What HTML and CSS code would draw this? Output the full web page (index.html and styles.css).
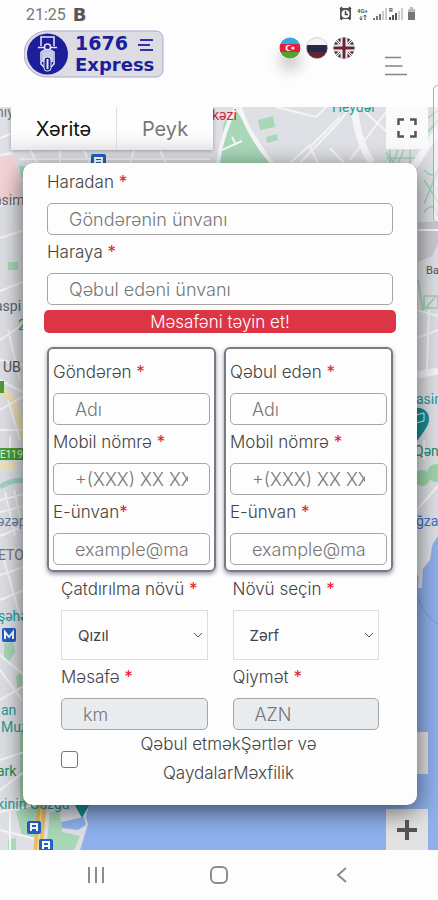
FILE: index.html
```html
<!DOCTYPE html>
<html lang="az">
<head>
    <meta charset="UTF-8">
    <meta name="viewport" content="width=device-width, initial-scale=1.0">
    <title>1676 Express</title>
    <link rel="stylesheet" href="styles.css">
</head>
<body>

    <div class="status-bar">
        <span class="clock">21:25</span>
        <b class="badge-b">B</b>
        <svg class="status-icons" width="80" height="18" viewBox="0 0 80 18">
            <path d="M3 3h11v11H3z" fill="#555"/>
            <circle cx="8.5" cy="9" r="4" fill="#fff"/>
            <path d="M8.5 6v3.5H11M3 4l2-2M14 4l-2-2M4 15l1-2M13 15l-1-2" fill="none" stroke="#444" stroke-width="1.5"/>
            <text x="20" y="8" font-size="6" font-weight="bold">4G+</text>
            <path d="M24 15v-4M22.5 13.5 24 15l1.5-1.5M28 15v-5M26.5 11.5 28 10l1.5 1.5" fill="none" stroke="#555"/>
            <path d="M37 15v-2M40 15v-4M43 15V9" stroke="#777" stroke-width="2"/>
            <path d="M46 15V6M49 15V3" stroke="#ccc" stroke-width="2"/>
            <path d="M53 15v-3M56 15v-5M59 15V8" stroke="#555" stroke-width="2"/>
            <path d="M62 15V6M65 15V3" stroke="#ccc" stroke-width="2"/>
            <text x="52" y="7" font-size="6" font-weight="bold">R</text>
            <path d="M71 4h2V2h3v2h2v5h-7z" fill="#bbb"/>
            <path d="M71 7h7v8h-7z" fill="#777"/>
        </svg>
    </div>

    <header class="header">
        <a href="#" class="logo" aria-label="1676 Express">
            <svg width="140" height="48" viewBox="0 0 140 48">
                <path d="M23 1H132a7 7 0 0 1 7 7v32a7 7 0 0 1-7 7H23a23 23 0 0 1 0-46z" fill="#dcdce2" stroke="#a9a9cf"/>
                <circle cx="23.5" cy="24" r="20.5" fill="#1c1e9c"/>
                <g fill="none" stroke="#e8e8f2" stroke-width="1.5">
                    <path d="M17 16V7h13v9M14 17.5h6M27 17.5h6"/>
                    <circle cx="23.5" cy="17" r="3"/>
                    <path d="M17 22c4-3 9-3 13 0v12l-3 3M17 22v12l3 3"/>
                </g>
                <path d="M18 22c3-2 8-2 11 0v10H18z" fill="#c6c8e4"/>
                <rect x="20" y="27" width="7" height="14" rx="3" fill="#1c1e9c" stroke="#e8e8f2"/>
                <path d="M23.5 29v10" stroke="#e8e8f2" stroke-width="2"/>
                <text x="51" y="20" font-size="19">1676</text>
                <text x="51" y="41" font-size="18">Express</text>
                <path d="M116 10h13M114 15h12M116 20h13" stroke="#3032a4" stroke-width="2"/>
            </svg>
        </a>
        <nav class="langs">
            <a href="#" class="active" aria-label="Azərbaycan">
                <svg width="22" height="22" viewBox="0 0 22 22">
                    <clipPath id="round"><circle cx="11" cy="11" r="10.5"/></clipPath>
                    <g clip-path="url(#round)">
                        <path d="M0 0h22v7H0z" fill="#35a9dc"/>
                        <path d="M0 7h22v8H0z" fill="#e5203c"/>
                        <path d="M0 15h22v7H0z" fill="#57a32d"/>
                    </g>
                    <circle cx="9.5" cy="11" r="3" fill="#fff"/>
                    <circle cx="10.5" cy="11" r="2.3" fill="#e5203c"/>
                    <circle cx="14" cy="11" r="1.5" fill="#fff"/>
                </svg>
            </a>
            <a href="#" aria-label="Русский">
                <svg width="22" height="22" viewBox="0 0 22 22">
                    <g clip-path="url(#round)">
                        <path d="M0 0h22v8H0z" fill="#f4f4f6"/>
                        <path d="M0 8h22v7H0z" fill="#222a47"/>
                        <path d="M0 15h22v7H0z" fill="#622532"/>
                    </g>
                    <circle cx="11" cy="11" r="10.5" fill="none" stroke="#aaa" stroke-width=".5"/>
                </svg>
            </a>
            <a href="#" aria-label="English">
                <svg width="22" height="22" viewBox="0 0 22 22">
                    <g clip-path="url(#round)">
                        <path d="M0 0h22v22H0z" fill="#23263a"/>
                        <path d="M1 1l20 20M21 1 1 21" stroke="#eee" stroke-width="3"/>
                        <path d="M1 1l20 20M21 1 1 21" stroke="#8b3545" stroke-width="1"/>
                        <path d="M11 0v22M0 11h22" stroke="#eee" stroke-width="7"/>
                        <path d="M11 0v22M0 11h22" stroke="#6e2634" stroke-width="3"/>
                    </g>
                </svg>
            </a>
        </nav>
        <button class="menu-btn" aria-label="Menyu">
            <svg width="22" height="20" viewBox="0 0 22 20">
                <path d="M0 1.5h16M0 10h17.5M0 18.5h22" stroke="#858585" stroke-width="1.5"/>
            </svg>
        </button>
    </header>

    <main class="map">
        <svg class="map-canvas" viewBox="0 107 438 743" preserveAspectRatio="xMidYMid slice" aria-hidden="true">
            <rect y="107" width="438" height="743" fill="#dfe0e5"/>

            <!-- sea -->
            <path d="M438 536c-9 12-15 30-25 48L380 790l-50 10H90l-4 18 2 6-8 26h358z" fill="#8fb0ec"/>
            <path d="M412 520h24l-6 40-8 10-2 12-4-14-8 2z" fill="#dfe0e5"/>
            <path d="M422 540l-2 48" stroke="#dfe0e5" stroke-width="4"/>
            <path d="M418 598q8 20 20 26" fill="none" stroke="#7c9ad2"/>

            <!-- parks -->
            <path d="M218 163l6-41 14-13 6 15 28 39z" fill="#a8d8b8"/>
            <path d="M258 120l15-4 2 11-15 3zM266 137l11-3 1 6-11 3z" fill="#a8d8b8"/>
            <path d="M0 157l13-2 9 27-4 16-18 4z" fill="#f3d3d6"/>
            <path d="M8 262h10v8H8zM19 166h8v12h-6zM4 643l9-1 2 10-6 10-5-4zM16 676l6-4v14l-5 2zM20 730h8v80h-8z" fill="#a8d8b8"/>
            <path d="M16 812l24-10v38l-18-4zM50 812h10l2 20 18 4-6 14H46zM8 840l8-2v12H8z" fill="#a8d8b8"/>
            <path d="M61 822l23-5 2 8-8 5-16-2z" fill="#8fb0ec"/>
            <path d="M0 390q20 10 22 50M0 466h16" stroke="#f1e3b8" stroke-width="7" fill="none"/>
            <path d="M0 487q12-8 26-6" stroke="#9fd3c8" stroke-width="5" fill="none"/>
            <g fill="none" stroke="#9ed2b2" stroke-width="1.5">
                <path d="M386 152l10 14M390 150v20M398 150l-6 16M404 150l-8 18M410 150v16M386 158h30M424 170q10 10 14 0M424 180l14 22M438 170l-14 34M424 212q10-12 14 4M428 118l10-8M428 132l10-12M424 296h14v12h-14zM426 308l10-12M418 280l5 30h-6"/>
            </g>
            <path d="M418 222h20v22l-6 12-14 6z" fill="#c9cad0"/>
            <circle cx="422" cy="478" r="8" fill="#9fd6ab"/>
            <circle cx="436" cy="473" r="9" fill="#9fd6ab"/>

            <!-- roads -->
            <g fill="none" stroke="#f4f5f7" stroke-width="2">
                <path d="M0 138l30-12M0 155l12-2M0 205l30-8M0 238l30-10M0 291l30-12M0 340l30-20M0 360l30 6M8 330l12 50M0 380l30 16M0 410l24-14M8 400l12 40M0 430h24M10 436v20"/>
                <path d="M0 500l24-6M0 512l24-6M5 492l10 44M14 490l8 36M0 536l24-10M0 575l24-8M4 560l16 56M0 600l24-10M0 655l24 20M0 670l22 30M0 700l24-14M0 760l24-8M0 790l24-18M0 812l40-8M0 830l40 10M10 812v38"/>
                <path d="M30 150l8 14M60 150v14M84 150l6 14M134 150l-4 14M160 150l6 14M20 159h190"/>
                <path d="M222 150l20-9M236 145l-4-8M236 108l36 55M300 163l40-42 10-14M318 163l-8-16 30-30M330 148l14 15M350 160l36-48M360 107l26 24M290 163l20-18M276 107l40 10 10-10M417 230h21M417 310l21 6M417 338l21-8M429 310l-2 60M417 400l21-4M417 510l21-24M424 440v20"/>
            </g>
            <path d="M218 163q4-30 18-56M240 107q8 28 32 56" stroke="#f4f5f7" stroke-width="4" fill="none"/>
            <path d="M354 107q4 36 18 56M438 130l-24 36M417 375l21-4" stroke="#f4f5f7" stroke-width="7" fill="none"/>
            <path d="M42 804l-4 46" stroke="#e6bd60" stroke-width="9"/>
            <path d="M42 804l-4 46" stroke="#f3d790" stroke-width="2"/>

            <path d="M0 381h4v12H0zM0 448h24v12H0z" fill="#4d9b35"/>
            <path d="M416 408a11 11 0 0 1 13 12q0 6-13 22z" fill="#17909b"/>
            <path d="M416 415l8-2v8l-8 2z" fill="none" stroke="#fff"/>
            <path d="M72 800h20l-10 18z" fill="#17909b"/>
            <g fill="#2161c7">
                <rect x="91" y="154" width="15" height="14" rx="2"/>
                <rect x="2" y="628" width="14" height="14" rx="2"/>
                <rect x="27" y="821" width="14" height="13" rx="2"/>
                <rect x="39" y="839" width="14" height="13" rx="2"/>
            </g>
            <g fill="none" stroke="#fff" stroke-width="2">
                <path d="M95 164v-6h7v6M95 161h7M31 831v-7h6v7M31 828h6M43 849v-7h6v7M43 846h6"/>
                <path d="M5 639v-7l4 5 4-5v7"/>
            </g>

            <!-- labels -->
            <g class="map-text">
                <text x="-4" y="117" fill="#777">nıy</text>
                <text x="-6" y="205" fill="#666">asim</text>
                <text x="-5" y="311" fill="#567">aspi</text>
                <text x="18" y="330" fill="#2a9a58">2</text>
                <text x="3" y="372" fill="#555">UB</text>
                <text x="0" y="458" font-size="10" fill="#dfe">E119</text>
                <text x="-3" y="526" fill="#68809a">əzəp</text>
                <text x="-2" y="560" fill="#777">ETO</text>
                <text x="-2" y="621" fill="#1e9a96">şəhər</text>
                <text x="1" y="715" fill="#1e9a96">an</text>
                <text x="1" y="732" fill="#1e9a96">Muz</text>
                <text x="-3" y="776" fill="#1d8a50">ark</text>
                <text x="-3" y="809" fill="#1e9a96">kinin Güzgü</text>
                <text x="212" y="120" fill="#d3263a">kəzi</text>
                <text x="332" y="112" fill="#1e9a96">Heydər</text>
                <text x="426" y="274" font-size="11" fill="#555">Bakı</text>
                <text x="416" y="404" fill="#1e9a96">asim</text>
                <text x="414" y="456" fill="#1d8a70">Qən</text>
                <text x="416" y="526" fill="#3b70c9">ğza</text>
            </g>
        </svg>

        <div class="map-types">
            <button class="active">Xəritə</button>
            <button>Peyk</button>
        </div>

        <button class="map-btn fullscreen" aria-label="Tam ekran">
            <svg width="20" height="20" viewBox="0 0 20 20">
                <path d="M1.5 7V1.5H7M13 1.5h5.5V7M18.5 13v5.5H13M7 18.5H1.5V13" fill="none" stroke="#555" stroke-width="2.5"/>
            </svg>
        </button>
        <button class="map-btn pegman" aria-label="Küçə görünüşü"></button>
        <button class="map-btn zoom-in" aria-label="Yaxınlaşdır">
            <svg width="20" height="20" viewBox="0 0 20 20">
                <path d="M10 0v20M0 10h20" stroke="#555" stroke-width="4"/>
            </svg>
        </button>

        <form class="order">
            <label for="from">Haradan <i>*</i></label>
            <input type="text" id="from" placeholder="Göndərənin ünvanı">
            <label for="to">Haraya <i>*</i></label>
            <input type="text" id="to" placeholder="Qəbul edəni ünvanı">
            <button type="button" class="distance-btn">Məsafəni təyin et!</button>

            <div class="people">
                <div class="person">
                    <label for="senderName">Göndərən <i>*</i></label>
                    <input type="text" id="senderName" placeholder="Adı">
                    <label for="senderPhone">Mobil nömrə <i>*</i></label>
                    <input type="tel" id="senderPhone" placeholder="+(XXX) XX XXX XX XX">
                    <label for="senderMail">E-ünvan<i>*</i></label>
                    <input type="email" id="senderMail" placeholder="example@mail.com">
                </div>
                <div class="person">
                    <label for="receiverName">Qəbul edən <i>*</i></label>
                    <input type="text" id="receiverName" placeholder="Adı">
                    <label for="receiverPhone">Mobil nömrə <i>*</i></label>
                    <input type="tel" id="receiverPhone" placeholder="+(XXX) XX XXX XX XX">
                    <label for="receiverMail">E-ünvan <i>*</i></label>
                    <input type="email" id="receiverMail" placeholder="example@mail.com">
                </div>
            </div>

            <div class="delivery">
                <div>
                    <label for="kind">Çatdırılma növü <i>*</i></label>
                    <select id="kind">
                        <option>Qızıl</option>
                    </select>
                    <label for="distance">Məsafə <i>*</i></label>
                    <input type="text" id="distance" placeholder="km" disabled>
                </div>
                <div>
                    <label for="parcel">Növü seçin <i>*</i></label>
                    <select id="parcel">
                        <option>Zərf</option>
                    </select>
                    <label for="price">Qiymət <i>*</i></label>
                    <input type="text" id="price" placeholder="AZN" disabled>
                </div>
            </div>

            <div class="terms">
                <input type="checkbox" id="agree">
                <label for="agree">Qəbul etməkŞərtlər və QaydalarMəxfilik</label>
            </div>
        </form>
    </main>

    <footer class="system-nav">
        <button aria-label="Son tətbiqlər">
            <svg width="18" height="18" viewBox="0 0 18 18">
                <path d="M2 1v16M9 1v16M16 1v16" stroke="#8c8c8c" stroke-width="2"/>
            </svg>
        </button>
        <button aria-label="Əsas ekran">
            <svg width="18" height="18" viewBox="0 0 18 18">
                <rect x="1" y="1" width="16" height="16" rx="5" fill="none" stroke="#8c8c8c" stroke-width="2"/>
            </svg>
        </button>
        <button aria-label="Geri">
            <svg width="18" height="18" viewBox="0 0 18 18">
                <path d="M13 2 5 9l8 7" fill="none" stroke="#8c8c8c" stroke-width="2"/>
            </svg>
        </button>
    </footer>

    <div class="edge-handle"></div>

</body>
</html>
```

FILE: styles.css
```css
* {
    box-sizing: border-box;
}

body {
    font-family: Inter, "Open Sans", sans-serif;
    font-size: 17px;
    font-weight: 300;
    color: #444;
    background-color: #fdfdfd;
    margin: 0;
    min-height: 100vh;
    display: flex;
    flex-direction: column;
    position: relative;
    overflow-x: hidden;
}

button {
    font-family: inherit;
    font-weight: inherit;
    border: none;
    padding: 0;
    cursor: pointer;
}

svg {
    display: block;
}

/* status bar */
.status-bar {
    display: flex;
    align-items: center;
    gap: 7px;
    height: 28px;
    padding: 0 21px 0 26px;
    font-family: Roboto, sans-serif;
    font-size: 16px;
    font-weight: 400;
    color: #777;
}

.badge-b {
    font-family: "DejaVu Sans", sans-serif;
    font-size: 18px;
    color: #555;
}

.status-icons {
    margin-left: auto;
    fill: #555;
}

/* header */
.header {
    display: flex;
    align-items: flex-start;
    height: 79px;
    padding: 2px 31px 0 24px;
}

.logo text {
    font-family: "DejaVu Sans", sans-serif;
    font-weight: bold;
    fill: #1c1e9c;
}

.langs {
    display: flex;
    gap: 5px;
    margin: 7px 30px 0 auto;
}

.langs .active {
    border-radius: 50%;
    box-shadow: 0 12px 14px rgba(0, 0, 0, 0.2);
}

.menu-btn {
    margin-top: 26px;
    background: none;
}

/* map */
.map {
    flex: 1;
    position: relative;
    overflow: hidden;
    padding: 0 21px 45px 23px;
}

.map-canvas {
    position: absolute;
    inset: 0;
    width: 100%;
    height: 100%;
}

.map-text {
    font-family: Roboto, sans-serif;
    font-size: 14px;
    font-weight: 400;
}

.map-types {
    position: relative;
    display: flex;
    gap: 1px;
    width: 202px;
    margin: 0 0 13px -12px;
    box-shadow: 0 1px 4px rgba(0, 0, 0, 0.3);
}

.map-types button {
    height: 43px;
    padding: 0 24px;
    flex: auto;
    font-size: 20px;
    font-weight: 400;
    color: #777;
    background: linear-gradient(#fdfdfd 60%, #ececec);
}

.map-types .active {
    color: #111;
}

.map-btn {
    position: absolute;
    right: 10px;
    width: 42px;
    height: 42px;
    display: flex;
    align-items: center;
    justify-content: center;
    background-color: #e2e2e2;
}

.fullscreen {
    top: 0;
    background-color: #fafafa;
}

.pegman {
    bottom: 76px;
}

.zoom-in {
    bottom: 0;
    height: 41px;
}

/* order form */
.order {
    position: relative;
    padding: 2px 24px 17px;
    background-color: #fdfdfd;
    border-radius: 10px;
    box-shadow: 0 6px 24px rgba(0, 0, 0, 0.6);
}

.order label {
    display: block;
    line-height: 34px;
    margin-bottom: 4px;
    white-space: nowrap;
}

.order label i {
    font-style: normal;
    font-weight: 400;
    color: #e02030;
}

.order input,
.order select {
    display: block;
    width: 100%;
    height: 32px;
    padding: 0 21px;
    font-family: inherit;
    font-size: 18px;
    font-weight: 300;
    color: #444;
    background-color: #fdfdfd;
    border: 1px solid #a5a5a5;
    border-radius: 5px;
}

.order input::placeholder {
    color: #777;
    opacity: 1;
}

.order input:disabled {
    background-color: #e9ecef;
}

.order select {
    height: 50px;
    padding: 0 16px;
    font-size: 15px;
    font-weight: 400;
    appearance: none;
    border-color: #ddd;
    border-radius: 0;
    background: #fdfdfd url("data:image/svg+xml,%3Csvg xmlns='http://www.w3.org/2000/svg' width='10' height='6'%3E%3Cpath d='M1 1l4 4 4-4' fill='none' stroke='%23555'/%3E%3C/svg%3E") no-repeat right 4px center;
}

.distance-btn {
    display: block;
    width: calc(100% + 6px);
    height: 23px;
    margin: 5px -3px 14px;
    font-size: 17px;
    color: #fff;
    background-color: #dc3545;
    border-radius: 5px;
}

.people {
    display: grid;
    grid-template-columns: 1fr 1fr;
    gap: 8px;
}

.person {
    min-width: 0;
    padding: 6px 4px 5px;
    border: 2px solid #777b84;
    border-radius: 6px;
    box-shadow: 0 2px 4px rgba(40, 45, 70, 0.5);
}

.delivery {
    display: grid;
    grid-template-columns: 1fr 1fr;
    gap: 25px;
    padding: 0 14px;
}

.terms {
    display: flex;
    align-items: center;
    padding: 0 14px;
}

.order .terms input {
    flex: none;
    width: 17px;
    height: 17px;
    margin: 0;
    padding: 0;
    appearance: none;
    border-color: #777;
    border-radius: 3px;
}

.order .terms input:checked {
    background-color: #dc3545;
}

.order .terms label {
    flex: 1;
    margin: 0;
    padding: 0 50px;
    line-height: 29px;
    text-align: center;
    white-space: normal;
}

/* phone navigation */
.system-nav {
    display: flex;
    justify-content: space-between;
    align-items: center;
    height: 50px;
    padding: 0 87px;
    background-color: #fdfdfd;
}

.system-nav button {
    background: none;
}

.edge-handle {
    position: absolute;
    top: 85px;
    right: -5px;
    width: 10px;
    height: 138px;
    background-color: rgba(255, 255, 255, 0.5);
    border: 1px solid #aaa;
    border-radius: 6px;
}
```
